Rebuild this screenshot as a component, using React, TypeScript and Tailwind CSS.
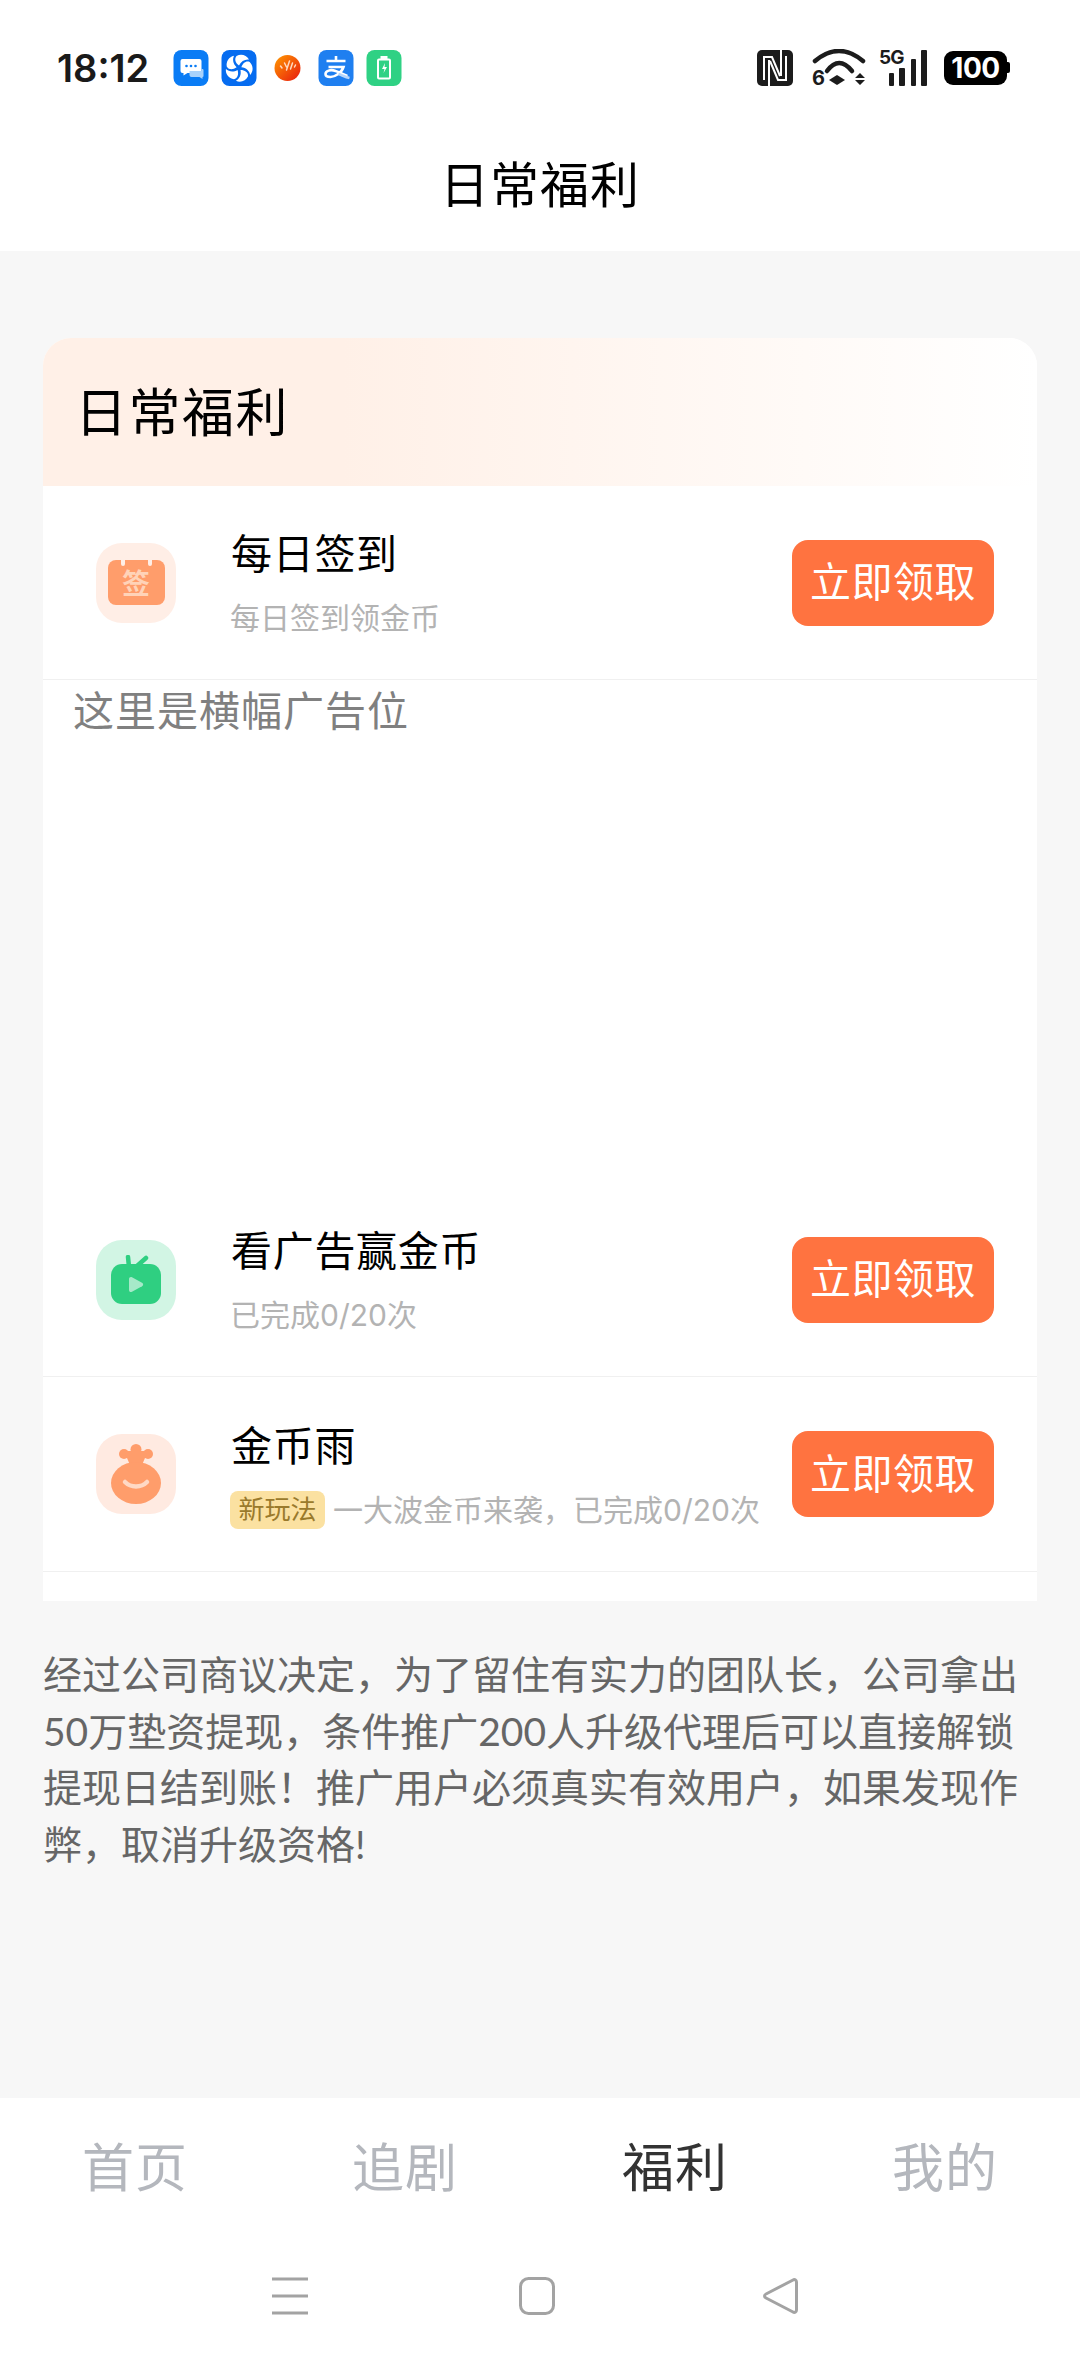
import React from "react";

const font = { fontFamily: '"Inter","Noto Sans CJK SC",sans-serif' };
const paragraphFont = { fontFamily: '"Lato","Noto Sans CJK SC",sans-serif' };

function StatusIcons() {
  return (
    <div className="flex items-center gap-[12px] ml-[24px]">
      <svg width="36" height="36" viewBox="0 0 35 36">
        <rect width="35" height="36" rx="8" fill="#0a7cf5" />
        <path d="M9 9h17a2 2 0 0 1 2 2v10a2 2 0 0 1-2 2H14l-4 2.500V23H9a2 2 0 0 1-2-2V11a2 2 0 0 1 2-2z" fill="#fff" />
        <path d="M16 21h12v-2h1a1 1 0 0 1 1 1v6a1 1 0 0 1-1 1v2l-3-2H18a2 2 0 0 1-2-2z" fill="#a9d2fb" />
        <circle cx="13" cy="16" r="1.300" fill="#0a7cf5" />
        <circle cx="17.500" cy="16" r="1.300" fill="#0a7cf5" />
        <circle cx="22" cy="16" r="1.300" fill="#0a7cf5" />
      </svg>
      <svg width="36" height="36" viewBox="0 0 35 36">
        <rect width="35" height="36" rx="8" fill="#066cf0" />
        <g fill="#fff" transform="translate(17.500 18)">
          {[0, 72, 144, 216, 288].map((a) => (
            <path key={a} transform={`rotate(${a})`} d="M0 -2.500C-3.500 -5 -5 -9 -2.500 -12C2 -14.500 7.500 -13 10 -8.500C6 -9 2 -7 0 -2.500z" />
          ))}
        </g>
      </svg>
      <svg className="mx-[5px]" width="27" height="36" viewBox="0 0 26 36">
        <defs>
          <linearGradient id="nc" x1="0" y1="0" x2="1" y2="1">
            <stop offset="0" stopColor="#ff9a00" />
            <stop offset="1" stopColor="#e8180f" />
          </linearGradient>
        </defs>
        <circle cx="13" cy="18" r="13" fill="url(#nc)" />
        <path d="M6 16l1.500 2M10 13l2 4M15 11l-3 9M18 13l-2 6M21 15l-1 2" stroke="#ffd9c0" strokeWidth="1.500" strokeLinecap="round" />
      </svg>
      <svg width="36" height="36" viewBox="0 0 35 36">
        <rect width="35" height="36" rx="8" fill="#1f7ff0" />
        <path d="M8 11h19M17.500 6v5M10 17h15c-2 6-9 10-13 10-3 0-5-1-5-3 0-3 5-5 10-3 4 1 8 4 12 5" fill="none" stroke="#fff" strokeWidth="2.600" />
        <path d="M20 24c3 1 7 3 11 4" fill="none" stroke="#b7d6fb" strokeWidth="2.600" />
      </svg>
      <svg width="36" height="36" viewBox="0 0 35 36">
        <rect width="35" height="36" rx="8" fill="#2fd184" />
        <rect x="11.500" y="9.500" width="12" height="19" rx="1" fill="none" stroke="#fff" strokeWidth="2" />
        <rect x="14" y="6" width="7" height="3" fill="#fff" />
        <path d="M18.500 13l-3 6h2.500l-1 4 3.500-6h-2.500z" fill="#fff" />
      </svg>
    </div>
  );
}

function RightStatus() {
  return (
    <div className="flex items-center ml-auto mr-[70px]">
      <svg width="36" height="36" viewBox="0 0 36 36" className="mr-[19px]">
        <rect width="36" height="36" rx="5" fill="#1c1c1c" />
        <path d="M7 30V7h8l8 19M12 36V10M29 6v24h-8l-8-19M24 0v26" fill="none" stroke="#fff" strokeWidth="2" />
      </svg>
      <div className="relative w-[54px] h-[37px] mr-[13px]">
        <svg width="54" height="37" viewBox="0 0 54 37">
          <path d="M3 12Q27 -8 51 12" fill="none" stroke="#1c1c1c" strokeWidth="4.500" strokeLinecap="round" />
          <path d="M15 22Q27 6 40 22" fill="none" stroke="#1c1c1c" strokeWidth="4.500" strokeLinecap="round" />
          <path d="M17 31l8-5 8 5-8 5z" fill="#1c1c1c" />
          <path d="M43 29l5-5 5 5zM43 31h10l-5 5z" fill="#1c1c1c" />
        </svg>
        <span className="absolute left-0 top-[21px] text-[20px] font-bold leading-[16px] text-[#1c1c1c]">6</span>
      </div>
      <div className="relative w-[48px] h-[36px] mr-[17px]">
        <span className="absolute left-0 top-0 text-[19px] font-bold leading-[16px] tracking-[-1px] text-[#1c1c1c]">5G</span>
        <div className="absolute left-[10px] bottom-0 w-[5px] h-[13px] bg-[#1c1c1c] rounded-[1px]" />
        <div className="absolute left-[20px] bottom-0 w-[6px] h-[18px] bg-[#1c1c1c] rounded-[1px]" />
        <div className="absolute left-[32px] bottom-0 w-[5px] h-[27px] bg-[#1c1c1c] rounded-[1px]" />
        <div className="absolute left-[42px] bottom-0 w-[6px] h-[36px] bg-[#1c1c1c] rounded-[1px]" />
      </div>
      <div className="flex items-center">
        <div className="w-[63px] h-[34px] bg-black rounded-[9px] flex items-center justify-center text-white text-[28px] font-bold leading-none tracking-[-0.5px]">100</div>
        <div className="w-[3px] h-[11px] bg-black rounded-r-[2px]" />
      </div>
    </div>
  );
}

function IconBox({ bg, children }: { bg: string; children: React.ReactNode }) {
  return (
    <div className={`w-[80px] h-[80px] rounded-[26px] flex items-center justify-center ${bg}`}>
      {children}
    </div>
  );
}

function Btn() {
  return (
    <button className="w-[202px] h-[86px] rounded-[16px] bg-[#ff7340] text-white text-[41px] tracking-[0.5px] leading-none shrink-0 ml-auto">
      立即领取
    </button>
  );
}

function Row({ icon, title, sub, h }: { icon: React.ReactNode; title: string; sub: React.ReactNode; h: string }) {
  return (
    <div className={`flex items-center pl-[53px] pr-[43px] border-b border-[#f0f0f0] ${h}`}>
      {icon}
      <div className="ml-[55px] flex flex-col">
        <div className="text-[41px] leading-[56px] text-black tracking-[0.7px]">{title}</div>
        <div className="mt-[15px] ml-[-1px] text-[30px] leading-[42px] text-[#b3b3b3] whitespace-nowrap">{sub}</div>
      </div>
      <Btn />
    </div>
  );
}

function Tab({ label, active }: { label: string; active?: boolean }) {
  return (
    <div className={`flex-1 text-center text-[52px] tracking-[1px] leading-none ${active ? "text-[#333333]" : "text-[#b4b7bd]"}`}>{label}</div>
  );
}

export default function App() {
  return (
    <div className="w-[1080px] h-[2362px] bg-[#f7f7f7] flex flex-col overflow-hidden" style={font}>
      <div className="bg-white h-[251px] shrink-0 flex flex-col">
        <div className="h-[132px] flex items-center pl-[57px] pt-[3px]">
          <span className="text-[38px] font-semibold text-[#1a1a1a] leading-none">18:12</span>
          <StatusIcons />
          <RightStatus />
        </div>
        <div className="text-center text-[49px] leading-[60px] text-black mt-[24px] tracking-[1px]">日常福利</div>
      </div>

      <div className="mx-[43px] mt-[87px] w-[994px] rounded-t-[28px] overflow-hidden bg-white shrink-0">
        <div className="h-[148px] bg-gradient-to-r from-[#fff0e7] from-[30%] to-white flex items-center pl-[32px]">
          <span className="text-[52px] leading-none text-black tracking-[1.5px] mt-[3px]">日常福利</span>
        </div>
        <Row
          h="h-[194px]"
          icon={
            <IconBox bg="bg-[#ffeee6]">
              <div className="relative w-[57px] h-[45px] mt-[-1px] rounded-[8px] bg-[#ff9d6b] flex items-center justify-center">
                <span className="absolute left-[13px] -top-[4px] w-[4px] h-[10px] rounded-full bg-[#ffeee6]" />
                <span className="absolute right-[13px] -top-[4px] w-[4px] h-[10px] rounded-full bg-[#ffeee6]" />
                <span className="text-[#ffd3b8] text-[28px] font-bold leading-none mt-[4px]">签</span>
              </div>
            </IconBox>
          }
          title="每日签到"
          sub="每日签到领金币"
        />
        <div className="h-[503px] pl-[30px] pt-[3px] text-[41px] leading-[56px] text-[#808080] tracking-[1px]">这里是横幅广告位</div>
        <Row
          h="h-[194px]"
          icon={
            <IconBox bg="bg-[#d2f5e4]">
              <svg width="50" height="49" viewBox="0 0 50 49">
                <path d="M17 2l1 10M35 3l-9 8" stroke="#2fcf81" strokeWidth="4.500" strokeLinecap="round" />
                <rect x="0" y="9" width="50" height="40" rx="11" fill="#2fcf81" />
                <path d="M18 24c0-1.500 1.500-2.500 3-1.700l10 5.500c1.500 1 1.500 2.500 0 3.400l-10 5.500c-1.500.8-3 0-3-1.700z" fill="#a6e9c9" />
              </svg>
            </IconBox>
          }
          title="看广告赢金币"
          sub="已完成0/20次"
        />
        <Row
          h="h-[195px]"
          icon={
            <IconBox bg="bg-[#ffeae1]">
              <svg width="50" height="60" viewBox="0 0 50 60">
                <circle cx="25" cy="5.500" r="5.500" fill="#ff9d6b" />
                <circle cx="13" cy="10" r="5" fill="#ff9d6b" />
                <circle cx="37" cy="10" r="5" fill="#ff9d6b" />
                <path d="M13 7h24l-6 14H19z" fill="#ff9d6b" />
                <ellipse cx="25" cy="39" rx="25" ry="21" fill="#ff9d6b" />
                <path d="M14 38c6 6 16 6 22 0" fill="none" stroke="#ffd9c5" strokeWidth="4.500" strokeLinecap="round" />
              </svg>
            </IconBox>
          }
          title="金币雨"
          sub={
            <span className="flex items-center">
              <span className="w-[95px] h-[38px] rounded-[8px] bg-[#fbe1a1] text-[#9a7a2c] text-[26px] leading-[38px] text-center mr-[8px]">新玩法</span>
              <span>一大波金币来袭，已完成0/20次</span>
            </span>
          }
        />
        <div className="h-[29px]" />
      </div>

      <p className="mx-[43px] mt-[45px] w-[985px] text-[39px] leading-[56.5px] text-[#666666]" style={paragraphFont}>
        经过公司商议决定，为了留住有实力的团队长，公司拿出50万垫资提现，条件推广200人升级代理后可以直接解锁提现日结到账！推广用户必须真实有效用户，如果发现作弊，取消升级资格!
      </p>

      <div className="mt-auto bg-white h-[264px] shrink-0 flex flex-col">
        <div className="flex items-center h-[142px]">
          <Tab label="首页" />
          <Tab label="追剧" />
          <Tab label="福利" active />
          <Tab label="我的" />
        </div>
        <div className="flex items-start pt-[37px] pl-[272px]">
          <svg className="mr-[211px]" width="36" height="38" viewBox="0 0 36 38">
            <path d="M0 2h36M0 19h36M0 36h36" stroke="#a3a3a3" strokeWidth="3" />
          </svg>
          <svg className="mr-[207px]" width="36" height="38" viewBox="0 0 36 38">
            <rect x="1.500" y="1.500" width="33" height="35" rx="8" fill="none" stroke="#a3a3a3" strokeWidth="3" />
          </svg>
          <svg width="36" height="38" viewBox="0 0 36 38">
            <path d="M31 3c1.500-1 3.500 0 3.500 2v28c0 2-2 3-3.500 2L4 21c-2-1-2-3 0-4z" fill="none" stroke="#a3a3a3" strokeWidth="3" />
          </svg>
        </div>
      </div>
    </div>
  );
}
